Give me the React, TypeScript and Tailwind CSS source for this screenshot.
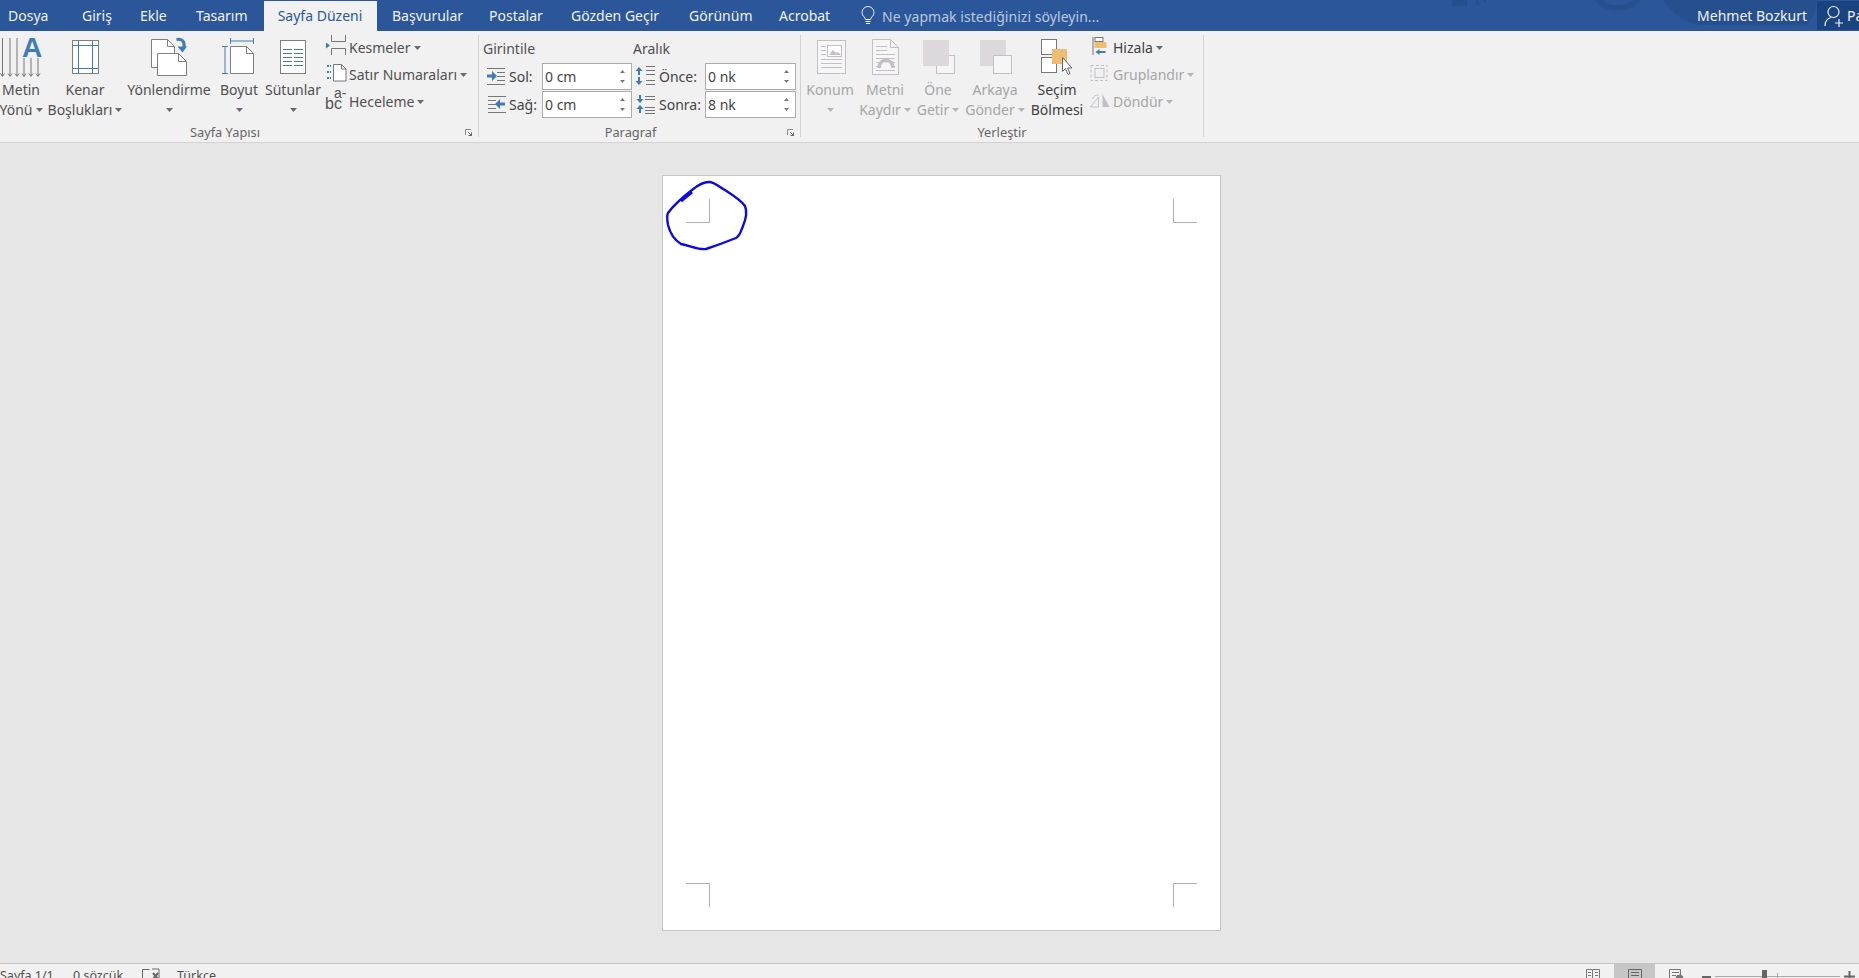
const GRAY = "#7f7f7f";
const BLUE = "#3f7cb8";
const OFF = "#c4bfc6";

function Caret({ off = false }: { off?: boolean }) {
  return (
    <svg width="7" height="4" viewBox="0 0 7 4" className="inline-block shrink-0">
      <path d="M0 0h7L3.500 4z" fill={off ? "#b5b5b5" : "#6a6a6a"} />
    </svg>
  );
}

function LargeButton({
  width,
  view,
  line1,
  line2,
  off = false,
  dark = false,
  children,
}: {
  width: string;
  view: string;
  line1: string;
  line2?: string;
  off?: boolean;
  dark?: boolean;
  children: React.ReactNode;
}) {
  return (
    <div className={`${width} shrink-0 flex flex-col items-center ${off ? "text-[#a6a6a6]" : dark ? "text-[#404040]" : "text-[#505050]"}`}>
      <svg viewBox={view} className="w-full h-[45px] shrink-0">
        {children}
      </svg>
      <div className="h-[20px] leading-[20px] whitespace-nowrap">{line1}</div>
      <div className="h-[20px] leading-[20px] whitespace-nowrap flex items-center gap-[3px]">
        {line2}
        {!dark && <Caret off={off} />}
      </div>
    </div>
  );
}

function SmallButton({
  view,
  icon,
  label,
  off = false,
  dark = false,
}: {
  view: string;
  icon: React.ReactNode;
  label: string;
  off?: boolean;
  dark?: boolean;
}) {
  return (
    <div className={`h-[27px] flex items-center whitespace-nowrap ${off ? "text-[#a6a6a6]" : dark ? "text-[#404040]" : "text-[#505050]"}`}>
      <svg viewBox={view} className="w-[24px] h-[27px] shrink-0">
        {icon}
      </svg>
      <span>{label}</span>
      <span className="ml-[3px] flex">
        <Caret off={off} />
      </span>
    </div>
  );
}

function Spinner({ value }: { value: string }) {
  return (
    <div className="flex-1 h-[27px] bg-white border border-[#ababab] flex items-center pl-[2px] pr-[6px] text-[#444444]">
      <span className="flex-1">{value}</span>
      <div className="flex flex-col gap-[7px] items-center">
        <svg width="5" height="3" viewBox="0 0 5 3"><path d="M0 3h5L2.500 0z" fill="#777777" /></svg>
        <svg width="5" height="3" viewBox="0 0 5 3"><path d="M0 0h5L2.500 3z" fill="#777777" /></svg>
      </div>
    </div>
  );
}

function Launcher() {
  return (
    <svg width="7" height="7" viewBox="0 0 7 7" className="absolute right-[6px] top-[6px]">
      <path d="M.5 6V.5H6" fill="none" stroke="#8a8a8a" />
      <path d="M3 3l3.500 3.500M6.500 3.500v3h-3" fill="none" stroke="#666666" />
    </svg>
  );
}

function Group({
  width,
  label,
  labelPad = "",
  launcher = false,
  children,
}: {
  width: string;
  label: string;
  labelPad?: string;
  launcher?: boolean;
  children: React.ReactNode;
}) {
  return (
    <div className={`${width} h-[102px] shrink-0 flex flex-col border-r border-[#d2d2d2]`}>
      <div className="flex-1 flex min-h-0">{children}</div>
      <div className={`h-[14px] leading-[19px] text-center text-[12.800px] text-[#666666] relative ${labelPad}`}>
        {label}
        {launcher && <Launcher />}
      </div>
    </div>
  );
}

function PageSetupGroup() {
  return (
    <Group width="w-[479px]" label="Sayfa Yapısı" labelPad="pr-[28px]" launcher>
      <LargeButton width="w-[42px]" view="0 35 42 45" line1="Metin" line2="Yönü">
        <g stroke="#777777" fill="none">
          {[2.500, 10, 17, 24, 31, 38].map((x, i) => (
            <path key={x} d={`M${x} ${i < 3 ? 38 : 58}V76M${x - 2} 73.500l2 3 2-3`} />
          ))}
        </g>
        <text x="32" y="57" textAnchor="middle" fontFamily="Liberation Sans" fontWeight="700" fontSize="28" fill={BLUE}>A</text>
      </LargeButton>
      <LargeButton width="w-[86px]" view="42 35 86 45" line1="Kenar" line2="Boşlukları">
        <rect x="72.500" y="40.500" width="26" height="33" fill="#ffffff" stroke={GRAY} />
        <path d="M78.500 41v32M92.500 41v32M73 45.500h25M73 68.500h25" stroke={BLUE} fill="none" />
      </LargeButton>
      <LargeButton width="w-[82px]" view="128 35 82 45" line1="Yönlendirme">
        <path d="M151.500 39.500h16l7 7v21h-23z" fill="#ffffff" stroke={GRAY} />
        <path d="M167.500 39.500v7h7" fill="none" stroke={GRAY} />
        <path d="M157.500 53.500h21l8 8v14h-29z" fill="#ffffff" stroke={GRAY} />
        <path d="M178.500 53.500v8h8" fill="none" stroke={GRAY} />
        <path d="M176.500 39.500c5.500-1 8.500 2 7.500 8" fill="none" stroke={BLUE} strokeWidth="3" />
        <path d="M177.500 46.500h9.500l-4.500 6z" fill={BLUE} />
      </LargeButton>
      <LargeButton width="w-[58px]" view="210 35 58 45" line1="Boyut">
        <path d="M230.500 46.500h16l7 7v20h-23z" fill="#ffffff" stroke={GRAY} />
        <path d="M246.500 46.500v7h7" fill="none" stroke={GRAY} />
        <path d="M230.500 38v6M253.500 38v6M231 41h22M222 46.500h6M222 73.500h6M225 47v26" stroke={BLUE} fill="none" />
      </LargeButton>
      <LargeButton width="w-[50px]" view="268 35 50 45" line1="Sütunlar">
        <rect x="280.500" y="40.500" width="25" height="33" fill="#ffffff" stroke={GRAY} />
        <path d="M283 49.500h9M283 53.500h9M283 57.500h9M283 61.500h9M283 65.500h9M294 49.500h9M294 53.500h9M294 57.500h9M294 61.500h9M294 65.500h9" stroke={BLUE} fill="none" />
      </LargeButton>
      <div className="ml-[7px] -mt-[1px] flex flex-col">
        <SmallButton
          view="325 35 24 27"
          label="Kesmeler"
          icon={
            <>
              <path d="M331.500 36v6.500h14V36M331.500 56v-6.500h14V56" fill="none" stroke="#777777" />
              <path d="M326 43.500l4 3-4 3z" fill={BLUE} />
            </>
          }
        />
        <SmallButton
          view="325 62 24 27"
          label="Satır Numaraları"
          icon={
            <>
              <path d="M333.500 65.500h8l4.500 4.500v12h-12.500z" fill="#ffffff" stroke="#777777" />
              <path d="M341.500 65.500V70h4.500" fill="none" stroke="#777777" />
              <path d="M327 67h3M330 67h1M327 73h4M327 79h4" stroke={BLUE} strokeWidth="2" strokeDasharray="2 1" fill="none" />
            </>
          }
        />
        <SmallButton
          view="325 89 24 27"
          label="Heceleme"
          icon={
            <>
              <text x="325" y="110" fontFamily="Liberation Sans" fontSize="16" fill="#555555">bc</text>
              <text x="334" y="99" fontFamily="Liberation Sans" fontSize="14" fill="#555555">a-</text>
            </>
          }
        />
      </div>
    </Group>
  );
}

function SpacingRow({
  view,
  icon,
  iconWidth,
  labelWidth,
  label,
  value,
}: {
  view: string;
  icon: React.ReactNode;
  iconWidth: string;
  labelWidth: string;
  label: string;
  value: string;
}) {
  return (
    <div className="h-[27px] flex items-center">
      <svg viewBox={view} className={`${iconWidth} h-[27px] shrink-0`}>
        {icon}
      </svg>
      <span className={`${labelWidth} shrink-0 text-[#444444]`}>{label}</span>
      <Spinner value={value} />
    </div>
  );
}

function ParagraphGroup() {
  return (
    <Group width="w-[322px]" label="Paragraf" labelPad="pr-[18px]" launcher>
      <div className="w-[154px] shrink-0 pr-[1px] flex flex-col">
        <div className="h-[28px] leading-[28px] pl-[4px] text-[#505050]">Girintile</div>
        <div className="flex flex-col gap-[1px]">
          <SpacingRow
            view="479 63 30 27"
            iconWidth="w-[30px]"
            labelWidth="w-[33px]"
            label="Sol:"
            value="0 cm"
            icon={
              <>
                <path d="M487 68.500h18M497 72.500h8M497 76.500h8M497 80.500h8M487 84.500h18" stroke="#777777" fill="none" />
                <path d="M487 74.500h5V71l5 5-5 5v-3.500h-5z" fill={BLUE} />
              </>
            }
          />
          <SpacingRow
            view="479 91 30 27"
            iconWidth="w-[30px]"
            labelWidth="w-[33px]"
            label="Sağ:"
            value="0 cm"
            icon={
              <>
                <path d="M488 96.500h18M488 100.500h8M488 104.500h8M488 108.500h8M488 112.500h18" stroke="#777777" fill="none" />
                <path d="M505 102.500h-5V99l-5 5 5 5v-3.500h5z" fill={BLUE} />
              </>
            }
          />
        </div>
      </div>
      <div className="w-[163px] shrink-0 flex flex-col">
        <div className="h-[28px] leading-[28px] text-[#505050]">Aralık</div>
        <div className="flex flex-col gap-[1px]">
          <SpacingRow
            view="633 63 26 27"
            iconWidth="w-[26px]"
            labelWidth="w-[46px]"
            label="Önce:"
            value="0 nk"
            icon={
              <>
                <path d="M646 66.500h9M646 70.500h9M646 74.500h9M646 80.500h9M646 84.500h9" stroke="#777777" fill="none" />
                <path d="M639 67l-3.500 4h2.500v4h2v-4h2.500zM639 85l-3.500-4h2.500v-4h2v4h2.500z" fill={BLUE} />
              </>
            }
          />
          <SpacingRow
            view="633 91 26 27"
            iconWidth="w-[26px]"
            labelWidth="w-[46px]"
            label="Sonra:"
            value="8 nk"
            icon={
              <>
                <path d="M645 96.500h10M645 99.500h10M645 107.500h10M645 110.500h10M645 113.500h10" stroke="#777777" fill="none" />
                <path d="M640 103l-3.500-4h2.500v-4h2v4h2.500zM640 105l-3.500 4h2.500v4h2v-4h2.500z" fill={BLUE} />
              </>
            }
          />
        </div>
      </div>
    </Group>
  );
}

function ArrangeGroup() {
  return (
    <Group width="w-[403px]" label="Yerleştir">
      <LargeButton width="w-[58px]" view="801 35 58 45" line1="Konum" off>
        <rect x="817.500" y="40.500" width="28" height="33" fill="#f7f6f7" stroke={OFF} />
        <rect x="827.500" y="45.500" width="14" height="11" fill="#ffffff" stroke={OFF} />
        <path d="M829 55l4-5 3 3 2-1 3 3z" fill={OFF} />
        <path d="M821 46.500h5M821 50.500h5M821 54.500h5M821 59.500h21M821 63.500h21M821 67.500h21" stroke={OFF} fill="none" />
      </LargeButton>
      <LargeButton width="w-[52px]" view="859 35 52 45" line1="Metni" line2="Kaydır" off>
        <path d="M872.500 39.500h18l8 8v27h-26z" fill="#f7f6f7" stroke={OFF} />
        <path d="M890.500 39.500v8h8" fill="none" stroke={OFF} />
        <path d="M876 46.500h11M876 50.500h11M876 54.500h19M876 58.500h19M876 62.500h3M892 62.500h3M876 66.500h3M892 66.500h3M876 70.500h19" stroke={OFF} fill="none" />
        <path d="M879 68c0-10 14-10 14 0" fill="none" stroke={OFF} strokeWidth="3.500" />
      </LargeButton>
      <LargeButton width="w-[54px]" view="911 35 54 45" line1="Öne" line2="Getir" off>
        <rect x="936.500" y="55.500" width="18" height="18" fill="#f7f6f7" stroke={OFF} />
        <rect x="923" y="40" width="26" height="26" fill="#dcd8dc" />
      </LargeButton>
      <LargeButton width="w-[60px]" view="965 35 60 45" line1="Arkaya" line2="Gönder" off>
        <rect x="980" y="40" width="26" height="26" fill="#dcd8dc" />
        <rect x="993.500" y="55.500" width="18" height="18" fill="#f7f6f7" stroke={OFF} />
      </LargeButton>
      <LargeButton width="w-[64px]" view="1025 35 64 45" line1="Seçim" line2="Bölmesi" dark>
        <rect x="1041.500" y="39.500" width="15" height="15" fill="#ffffff" stroke="#777777" />
        <rect x="1041.500" y="57.500" width="15" height="15" fill="#ffffff" stroke="#777777" />
        <rect x="1052" y="49" width="15" height="15" fill="#edbd73" />
        <path d="M1062.500 57.500v14l3-3 2.500 6 2-1-2.500-5.500h4.500z" fill="#ffffff" stroke="#666666" />
      </LargeButton>
      <div className="-mt-[1px] flex flex-col">
        <SmallButton
          view="1089 35 23 27"
          label="Hizala"
          dark
          icon={
            <>
              <path d="M1092.500 38v18" stroke="#777777" fill="none" />
              <rect x="1094.500" y="38.500" width="8" height="4" fill="#ffffff" stroke="#777777" />
              <rect x="1094" y="43" width="12" height="6" fill="#edbd73" />
              <path d="M1095 53l4-3v2h6v2h-6v2z" fill={BLUE} />
            </>
          }
        />
        <SmallButton
          view="1089 62 23 27"
          label="Gruplandır"
          off
          icon={
            <>
              <rect x="1090.500" y="66.500" width="16" height="15" fill="none" stroke={OFF} strokeDasharray="3 2" />
              <rect x="1094.500" y="69.500" width="9" height="9" fill="none" stroke={OFF} />
            </>
          }
        />
        <SmallButton
          view="1089 89 23 27"
          label="Döndür"
          off
          icon={
            <>
              <path d="M1090 108l8-10v10z" fill="none" stroke={OFF} />
              <path d="M1102 95l7 13h-7z" fill={OFF} />
              <path d="M1092 100c1-3 3-4 6-4" fill="none" stroke={OFF} />
            </>
          }
        />
      </div>
    </Group>
  );
}

function TitleBar() {
  return (
    <div className="relative h-[31px] shrink-0 bg-[#2b579a] flex text-[#f1f1f1] overflow-hidden">
      <svg className="absolute right-0 top-0" width="420" height="31" viewBox="1439 0 420 31">
        <g fill="#264f8e">
          <rect x="1452" y="0" width="15" height="6" />
          <rect x="1476" y="0" width="3" height="5" />
          <rect x="1483" y="0" width="3" height="3" />
          <path d="M1595 0a23 13 0 0 0 45 0h-8a15 7 0 0 1-29 0z" />
          <path d="M1663 0c10 14 22 23 36 25h108c6-8 9-16 10-25z" />
        </g>
      </svg>
      <div className="relative flex pt-[1px] w-full">
        <div className="w-[74px] pl-[8px] leading-[30px]">Dosya</div>
        <div className="w-[58px] pl-[8px] leading-[30px]">Giriş</div>
        <div className="w-[56px] pl-[8px] leading-[30px]">Ekle</div>
        <div className="w-[76px] pl-[8px] leading-[30px]">Tasarım</div>
        <div className="w-[113px] pr-[1px] text-center bg-[#f1f1f1] text-[#2b579a] leading-[30px]">Sayfa Düzeni</div>
        <div className="w-[97px] pl-[15px] leading-[30px]">Başvurular</div>
        <div className="w-[82px] pl-[15px] leading-[30px]">Postalar</div>
        <div className="w-[118px] pl-[15px] leading-[30px]">Gözden Geçir</div>
        <div className="w-[90px] pl-[15px] leading-[30px]">Görünüm</div>
        <div className="w-[83px] pl-[15px] leading-[30px] shrink-0">Acrobat</div>
        <div className="flex items-center h-[30px] pl-[14px]">
          <svg width="14" height="20" viewBox="0 0 14 20" fill="none" stroke="#f1f1f1" className="mr-[7px]">
            <path d="M4.500 13.500c0-2-3.500-3.500-3.500-7a6 6 0 0 1 12 0c0 3.500-3.500 5-3.500 7z" />
            <path d="M4.500 15.500h5M5 17.500h4" />
          </svg>
          <span className="text-[#b9c9e0] tracking-[0.05px]">Ne yapmak istediğinizi söyleyin...</span>
        </div>
        <div className="ml-auto mr-[10px] leading-[30px]">Mehmet Bozkurt</div>
        <div className="w-[42px] h-[29px] bg-[#1a4480] flex items-center pl-[7px] overflow-hidden shrink-0">
          <svg width="20" height="22" viewBox="0 0 20 22" fill="none" stroke="#f1f1f1" strokeWidth="1.200" className="shrink-0">
            <circle cx="9.500" cy="7" r="5.500" />
            <path d="M1 21c0-4.500 2.500-7.500 6-8.500M11 18h8M15 14v8" />
          </svg>
          <span className="ml-[3px] whitespace-nowrap">Paylaş</span>
        </div>
      </div>
    </div>
  );
}

function CropMark({ side }: { side: "tl" | "tr" | "bl" | "br" }) {
  const cls = {
    tl: "border-r border-b",
    tr: "border-l border-b",
    bl: "border-r border-t",
    br: "border-l border-t",
  }[side];
  return <div className={`w-[24px] h-[24px] border-[#b0b0b0] ${cls}`} />;
}

function Page() {
  return (
    <div className="relative w-[559px] h-[756px] bg-white border border-[#c6c6c6] p-[23px] flex flex-col justify-between">
      <div className="flex justify-between">
        <CropMark side="tl" />
        <CropMark side="tr" />
      </div>
      <div className="flex justify-between">
        <CropMark side="bl" />
        <CropMark side="br" />
      </div>
      {/* el yazısı daire */}
      <svg className="absolute left-[-12px] top-[-11px]" width="120" height="100" viewBox="0 0 120 100" fill="none" stroke="#0a0ae6" strokeWidth="2.400" strokeLinejoin="round">
        <path d="M17 48C22 41 32 32 41 25 47 20 53 17 58 17 64 17 68 22 74 25 80 29 90 35 94 41 96 46 95 54 92 61 90 66 89 71 85 73 75 77 64 81 55 84 48 85 40 81 30 79 22 74 19 68 17 60 16 54 16 50 17 48Z" />
        <path d="M30 36L41 27" strokeWidth="3" />
      </svg>
    </div>
  );
}

function StatusBar() {
  return (
    <div className="h-[22px] shrink-0 bg-[#f1f1f1] border-t border-[#c6c6c6] flex items-start text-[12.500px] text-[#505050] relative">
      <span className="w-[73px] leading-[22px] pt-[1px]">Sayfa 1/1</span>
      <span className="w-[69px] leading-[22px] pt-[1px]">0 sözcük</span>
      <svg width="18" height="16" viewBox="0 0 18 16" className="mt-[4px] shrink-0" fill="none" stroke="#666666">
        <path d="M.5 12V1.500h7M10 1h7v11" />
        <path d="M11 5l5 6M16 5l-5 6" strokeWidth="2" />
      </svg>
      <span className="ml-[17px] leading-[22px] pt-[1px]">Türkçe</span>
      <div className="ml-auto flex items-start h-full">
        <svg width="14" height="12" viewBox="0 0 14 12" className="mt-[5px] shrink-0" fill="none" stroke="#777777">
          <path d="M.5.500h6v11h-6zM7 .500h6.500v11H7M2 3.500h3M2 6.500h3M9 3.500h3M9 6.500h3" />
        </svg>
        <div className="ml-[14px] w-[41px] h-full bg-[#c6c6c6] flex justify-center pt-[5px] shrink-0">
          <svg width="14" height="12" viewBox="0 0 14 12" fill="none" stroke="#666666">
            <path d="M.5.500h13v11H.5zM3 3.500h8M3 6.500h8M3 9.500h8" />
          </svg>
        </div>
        <svg width="15" height="13" viewBox="0 0 15 13" className="ml-[14px] mt-[5px] shrink-0" fill="none" stroke="#777777">
          <path d="M.5 12V.500h11V6M3 3.500h7M3 6.500h4" />
          <circle cx="10.500" cy="9.500" r="3.500" fill="#777777" />
        </svg>
        <div className="ml-[18px] w-[9px] h-[2px] bg-[#666666] mt-[12px] shrink-0" />
        <div className="relative ml-[4px] w-[125px] h-[1px] bg-[#aaaaaa] mt-[12px] shrink-0">
          <div className="absolute left-[47px] top-[-6px] w-[5px] h-[12px] bg-[#666666]" />
          <div className="absolute left-[62px] top-[-3px] w-[1px] h-[7px] bg-[#aaaaaa]" />
        </div>
        <svg width="11" height="11" viewBox="0 0 11 11" className="ml-[4px] mr-[4px] mt-[7px] shrink-0">
          <path d="M0 4.500h11v2H0zM4.500 0h2v11h-2z" fill="#666666" />
        </svg>
      </div>
    </div>
  );
}

export default function App() {
  return (
    <div className="h-[978px] w-[1859px] overflow-hidden flex flex-col bg-[#e6e6e6] text-[14px] font-['Noto_Sans',sans-serif]">
      <TitleBar />
      <div className="h-[112px] shrink-0 bg-[#f1f1f1] flex pt-[4px] border-b border-[#d4d4d4]">
        <PageSetupGroup />
        <ParagraphGroup />
        <ArrangeGroup />
      </div>
      <div className="h-[820px] shrink-0 pl-[662px] pt-[32px]">
        <Page />
      </div>
      <StatusBar />
    </div>
  );
}
